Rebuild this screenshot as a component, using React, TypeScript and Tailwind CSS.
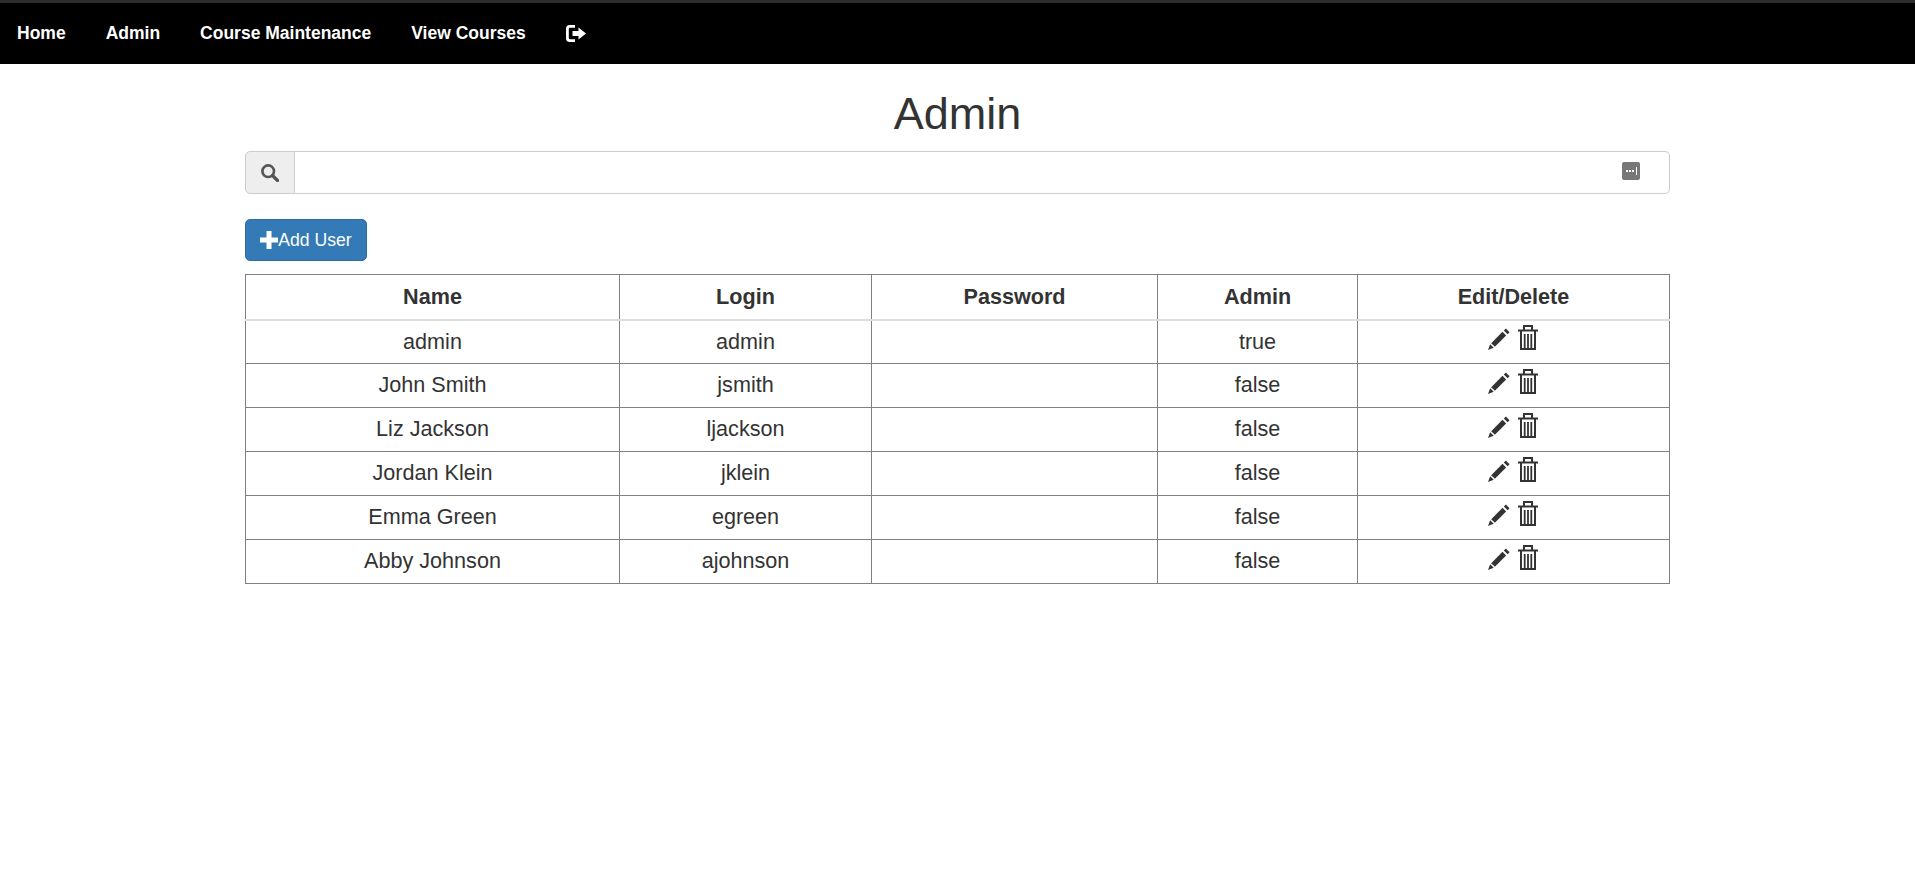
import React from "react";

const users = [
  { name: "admin", login: "admin", admin: "true" },
  { name: "John Smith", login: "jsmith", admin: "false" },
  { name: "Liz Jackson", login: "ljackson", admin: "false" },
  { name: "Jordan Klein", login: "jklein", admin: "false" },
  { name: "Emma Green", login: "egreen", admin: "false" },
  { name: "Abby Johnson", login: "ajohnson", admin: "false" },
];

const LogoutIcon = () => (
  <svg width="20" height="17" viewBox="0 0 20 17" fill="currentColor" className="block">
    <path d="M3.500 0H9v2.800H4c-.7 0-1.200.5-1.200 1.200v9c0 .7.5 1.200 1.200 1.200h5V17H3.500C1.500 17 0 15.500 0 13.500v-10C0 1.500 1.500 0 3.500 0z" />
    <path d="M6.500 6h6V2.500L20 8.500l-7.500 6V11h-6z" />
  </svg>
);

const SearchIcon = () => (
  <svg width="18" height="18" viewBox="0 0 18 18" fill="none" stroke="#555555">
    <circle cx="7.200" cy="7.200" r="5.800" strokeWidth="2.600" />
    <path d="M11.500 11.500l5 5" strokeWidth="3.200" strokeLinecap="round" />
  </svg>
);

const PlusIcon = () => (
  <svg width="18" height="18" viewBox="0 0 18 18" fill="white">
    <path d="M6.500 0h5v6.500H18v5h-6.500V18h-5v-6.500H0v-5h6.500z" />
  </svg>
);

const PencilIcon = () => (
  <svg width="22" height="22" viewBox="0 0 24 24" fill="#333333" className="mt-[3px]">
    <path d="M19.500 .5l4 4-2.200 2.200-4-4z" />
    <path d="M15.800 4.200l4 4L7.500 20.500l-4-4z" />
    <path d="M2.400 17.800l3.800 3.800L0 24z" />
  </svg>
);

const TrashIcon = () => (
  <svg width="20" height="25" viewBox="0 0 20 25" fill="none" stroke="#333333">
    <path d="M0 5.500h20" strokeWidth="2" />
    <path d="M6 5.500V1h8v4.500" strokeWidth="2" />
    <path d="M3 5.500V24h14V5.500" strokeWidth="2" />
    <path d="M6.700 9v14M10 9v14M13.300 9v14" strokeWidth="1.800" />
  </svg>
);

const App = () => {
  return (
    <div className="min-h-screen bg-white font-['Liberation_Sans',Arial,sans-serif] text-[#333333]">
      <nav className="h-16 bg-black border-t-[3px] border-[#2e2e2e] flex items-center text-white text-[17.5px] font-bold">
        <a className="pl-[17px] pr-[20px]">Home</a>
        <a className="px-[20px]">Admin</a>
        <a className="px-[20px]">Course Maintenance</a>
        <a className="px-[20px]">View Courses</a>
        <a className="px-[20px]">
          <LogoutIcon />
        </a>
      </nav>

      <div className="w-[1425px] ml-[245px]">
        <h1 className="text-[45px] leading-[50px] text-center mt-[25px] mb-[12px]">Admin</h1>

        <div className="flex h-[43px]">
          <div className="w-[50px] flex items-center justify-center bg-[#eeeeee] border border-[#cccccc] rounded-l-[5px]">
            <SearchIcon />
          </div>
          <div className="flex-1 border border-l-0 border-[#cccccc] rounded-r-[5px] flex items-center justify-end pr-[29px] pb-[4px]">
            <div className="w-[18px] h-[18px] rounded-[2px] bg-[#777777] flex items-center justify-center gap-[1px]">
              <span className="w-[2px] h-[2px] bg-white" />
              <span className="w-[2px] h-[2px] bg-white" />
              <span className="w-[2px] h-[2px] bg-white" />
              <span className="w-[1px] h-[8px] bg-white ml-[1px]" />
            </div>
          </div>
        </div>

        <button className="mt-[25px] h-[42px] w-[122px] bg-[#337ab7] border border-[#2e6da4] rounded-[5px] text-white text-[17.6px] flex items-center justify-center">
          <PlusIcon />
          Add User
        </button>

        <table className="mt-[13px] w-full border-collapse table-fixed text-[21.6px] text-center">
          <colgroup>
            <col className="w-[374px]" />
            <col className="w-[252px]" />
            <col className="w-[286px]" />
            <col className="w-[200px]" />
            <col />
          </colgroup>
          <thead>
            <tr className="h-[45px] font-bold">
              <th className="border border-[#808080] border-b-[#dddddd] border-b-2">Name</th>
              <th className="border border-[#808080] border-b-[#dddddd] border-b-2">Login</th>
              <th className="border border-[#808080] border-b-[#dddddd] border-b-2">Password</th>
              <th className="border border-[#808080] border-b-[#dddddd] border-b-2">Admin</th>
              <th className="border border-[#808080] border-b-[#dddddd] border-b-2">Edit/Delete</th>
            </tr>
          </thead>
          <tbody>
            {users.map((u) => (
              <tr key={u.login} className="h-[44px]">
                <td className="border border-[#808080]">{u.name}</td>
                <td className="border border-[#808080]">{u.login}</td>
                <td className="border border-[#808080]"></td>
                <td className="border border-[#808080]">{u.admin}</td>
                <td className="border border-[#808080]">
                  <div className="flex items-center justify-center gap-[8px] pb-[8px] pr-[2px]">
                    <PencilIcon />
                    <TrashIcon />
                  </div>
                </td>
              </tr>
            ))}
          </tbody>
        </table>
      </div>
    </div>
  );
};

export default App;
